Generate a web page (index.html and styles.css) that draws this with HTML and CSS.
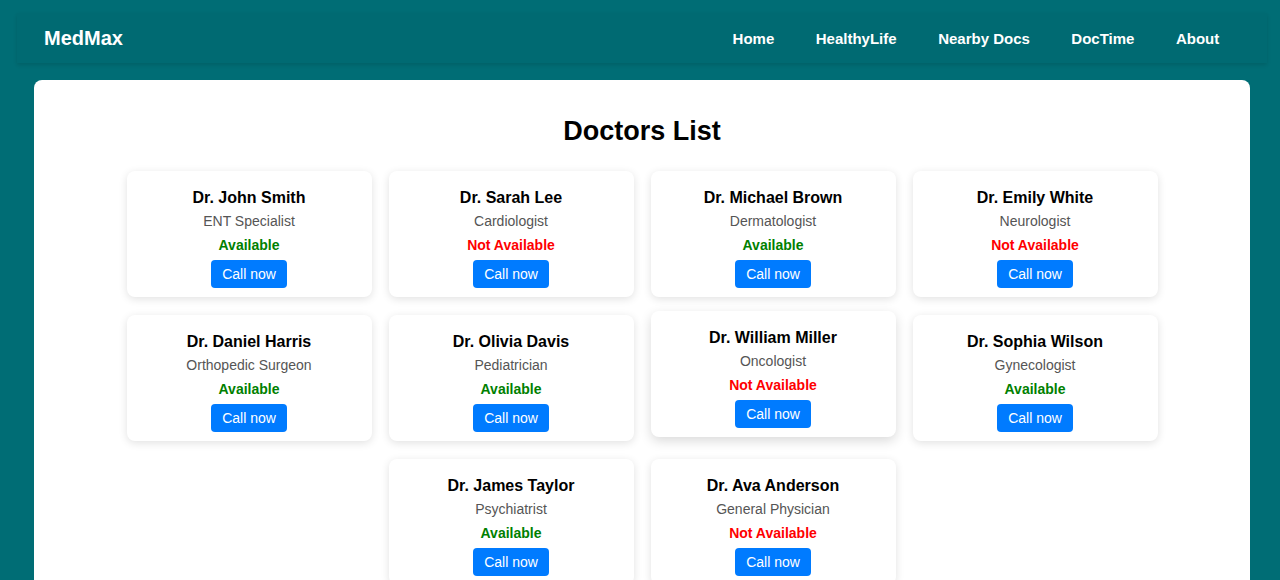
FILE: index.html
```html
<!DOCTYPE html>
<html>
<head>
<meta charset="utf-8">
<link rel="stylesheet" href="styles.css">
</head>
<body>
<header class="navbar">
  <div class="logo">MedMax</div>
  <nav class="nav-links">
    <a href="#">Home</a>
    <a href="#">HealthyLife</a>
    <a href="#">Nearby Docs</a>
    <a href="#">DocTime</a>
    <a href="#">About</a>
  </nav>
</header>
<main class="container">
  <h1 class="title">Doctors List</h1>
  <div class="doctor-grid">
    <div class="card"><h3>Dr. John Smith</h3><p class="spec">ENT Specialist</p><p class="status ok">Available</p><button class="call">Call now</button></div>
    <div class="card"><h3>Dr. Sarah Lee</h3><p class="spec">Cardiologist</p><p class="status no">Not Available</p><button class="call">Call now</button></div>
    <div class="card"><h3>Dr. Michael Brown</h3><p class="spec">Dermatologist</p><p class="status ok">Available</p><button class="call">Call now</button></div>
    <div class="card"><h3>Dr. Emily White</h3><p class="spec">Neurologist</p><p class="status no">Not Available</p><button class="call">Call now</button></div>
    <div class="card"><h3>Dr. Daniel Harris</h3><p class="spec">Orthopedic Surgeon</p><p class="status ok">Available</p><button class="call">Call now</button></div>
    <div class="card"><h3>Dr. Olivia Davis</h3><p class="spec">Pediatrician</p><p class="status ok">Available</p><button class="call">Call now</button></div>
    <div class="card hovered"><h3>Dr. William Miller</h3><p class="spec">Oncologist</p><p class="status no">Not Available</p><button class="call">Call now</button></div>
    <div class="card"><h3>Dr. Sophia Wilson</h3><p class="spec">Gynecologist</p><p class="status ok">Available</p><button class="call">Call now</button></div>
    <div class="card"><h3>Dr. James Taylor</h3><p class="spec">Psychiatrist</p><p class="status ok">Available</p><button class="call">Call now</button></div>
    <div class="card"><h3>Dr. Ava Anderson</h3><p class="spec">General Physician</p><p class="status no">Not Available</p><button class="call">Call now</button></div>
  </div>
</main>
</body>
</html>
```

FILE: styles.css
```css
* { box-sizing: border-box; }
html, body {
  margin: 0;
  background: #006d75;
  font-family: "Liberation Sans", Arial, sans-serif;
}
body {
  padding: 13px 13px 0 17px;
}
.navbar {
  display: flex;
  align-items: center;
  justify-content: space-between;
  height: 50px;
  padding: 0 27px;
  background: rgba(0, 0, 0, 0.025);
  box-shadow: 0 2px 4px rgba(0, 0, 0, 0.12);
}
.logo {
  color: #fff;
  font-weight: bold;
  font-size: 20px;
  padding-top: 1px;
}
.nav-links {
  display: flex;
}
.nav-links a {
  color: #fff;
  text-decoration: none;
  font-weight: bold;
  font-size: 15px;
  padding: 0 20.75px;
}
.nav-links a:first-child { padding-left: 0; }
.container {
  margin: 17px 17px 0 17px;
  background: #fff;
  border-radius: 8px 8px 0 0;
  padding: 20px 0 40px;
  min-height: 600px;
}
.title {
  text-align: center;
  font-size: 27px;
  margin: 16px 0 24px;
  color: #000;
}
.doctor-grid {
  display: flex;
  flex-wrap: wrap;
  justify-content: center;
  gap: 18px 17px;
  width: 1031px;
  margin: 0 auto;
}
.card {
  width: 245px;
  background: #fff;
  border-radius: 8px;
  box-shadow: 0 2px 8px rgba(0, 0, 0, 0.12);
  padding: 18px 10px 9px;
  display: flex;
  flex-direction: column;
  align-items: center;
  text-align: center;
}
.card.hovered {
  transform: translateY(-4px);
  box-shadow: 0 4px 12px rgba(0, 0, 0, 0.15);
}
.card h3 {
  margin: 0;
  font-size: 16px;
  line-height: 18px;
  color: #000;
}
.spec {
  margin: 6px 0 0;
  font-size: 14px;
  line-height: 16px;
  color: #555;
}
.status {
  margin: 8px 0 0;
  font-size: 14px;
  line-height: 16px;
  font-weight: bold;
}
.status.ok { color: #008000; }
.status.no { color: #ff0000; }
.call {
  margin-top: 7px;
  background: #007bff;
  color: #fff;
  border: none;
  border-radius: 4px;
  font-family: "Liberation Sans", Arial, sans-serif;
  font-size: 14px;
  height: 28px;
  padding: 0 11.5px;
}
```
